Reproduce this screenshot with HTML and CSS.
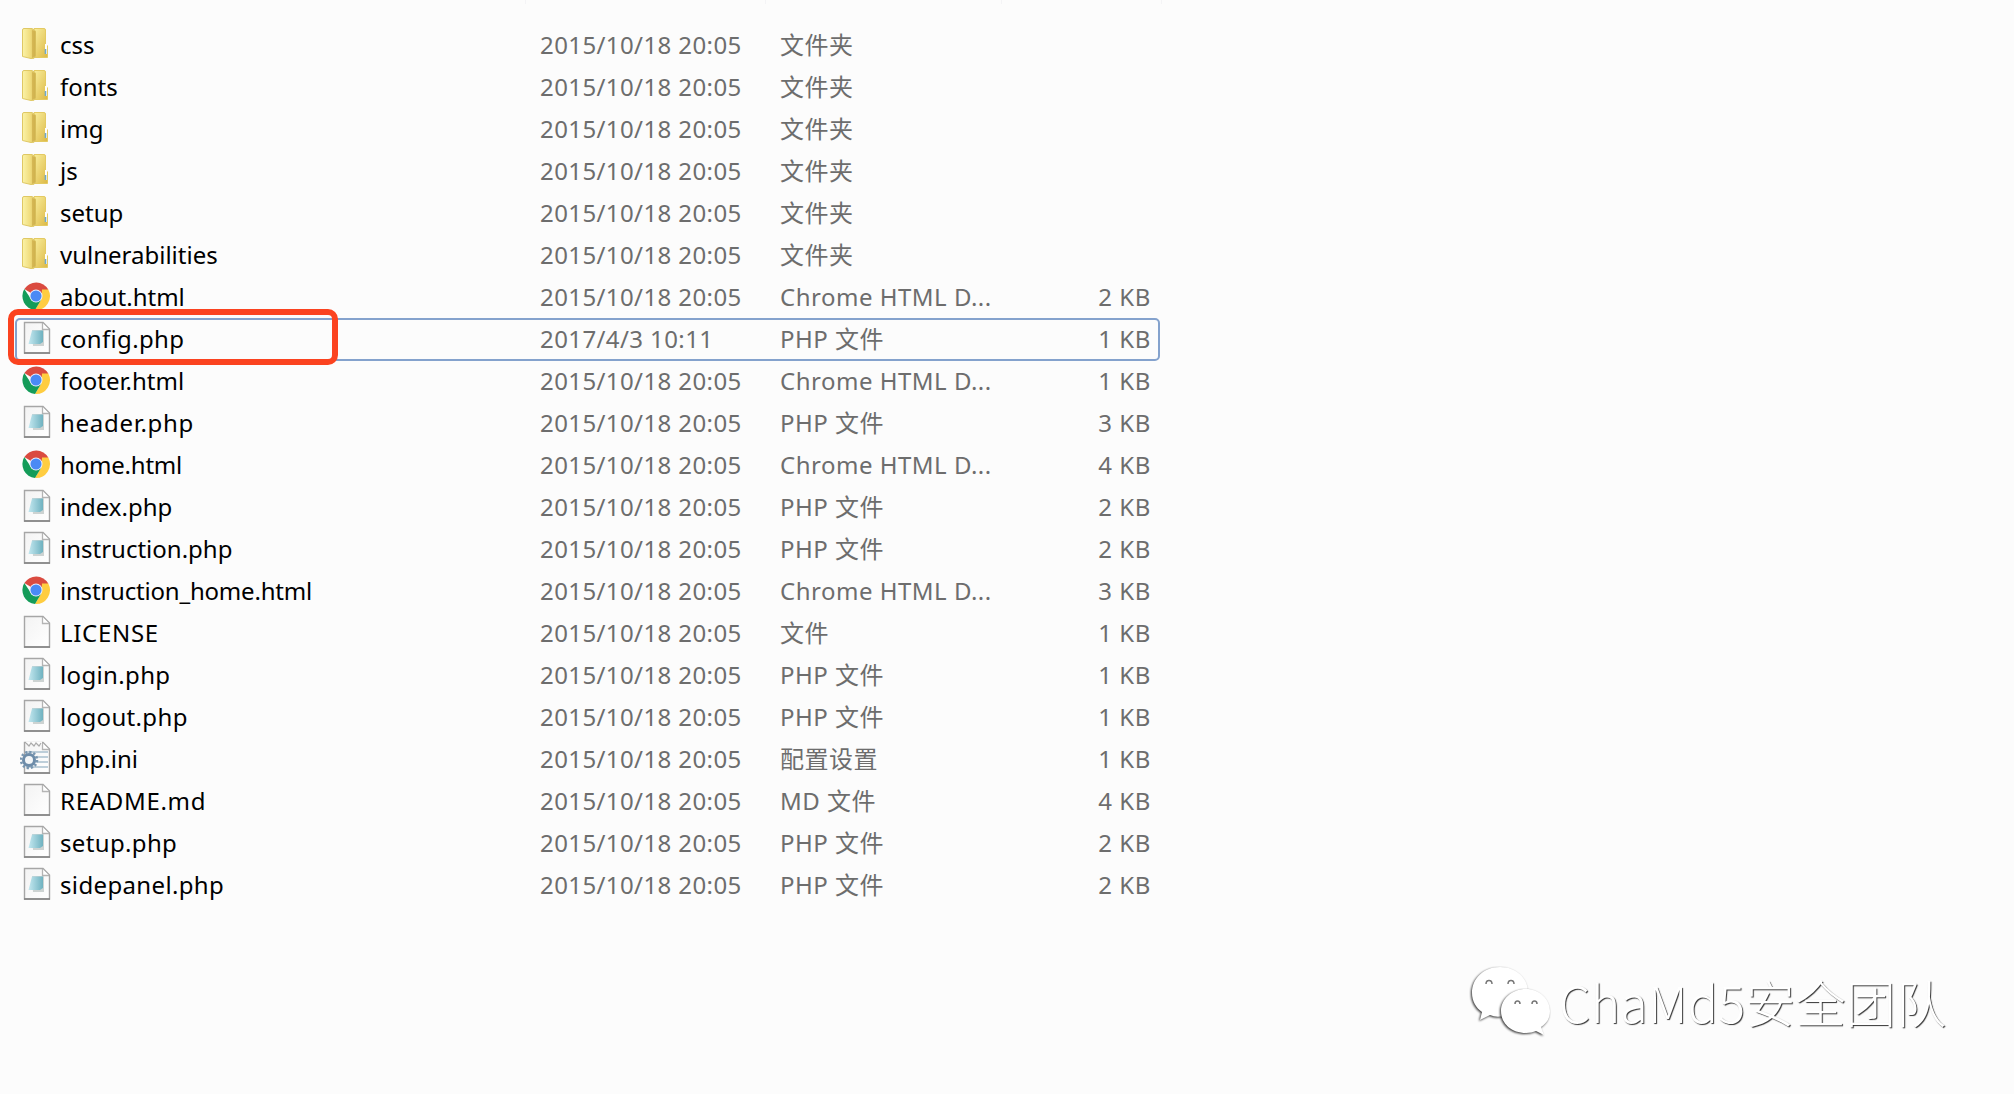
FILE: index.html
```html
<!DOCTYPE html>
<html lang="zh-CN">
<head>
<meta charset="utf-8">
<title>Files</title>
<link rel="stylesheet" href="styles.css">
</head>
<body>
<svg class="defs" aria-hidden="true">
  <defs>
    <linearGradient id="gf" x1="0" x2="1"><stop offset="0" stop-color="#fbf3a8"/><stop offset=".6" stop-color="#f0dc7c"/><stop offset="1" stop-color="#d8bc5c"/></linearGradient>
    <linearGradient id="gb" x1="0" x2="1" y2="1"><stop offset="0" stop-color="#f9ee9c"/><stop offset="1" stop-color="#dcb845"/></linearGradient>
    <linearGradient id="gt" x1="0" x2="1"><stop offset="0" stop-color="#c4e8f0"/><stop offset="1" stop-color="#6fb2c0"/></linearGradient>
    <linearGradient id="gp" x1="0" x2="1" y2="1"><stop offset="0" stop-color="#f3f3f3"/><stop offset="1" stop-color="#fff"/></linearGradient>
    <symbol id="folder" viewBox="0 0 32 34">
      <path d="M14 1.500H24Q25.500 1.500 25.500 3V17L27.500 19V30.500H14Z" fill="url(#gb)" stroke="#e4ca62"/>
      <path d="M2.500 3Q2.500 1.500 4 1.500H12L15.500 4V29Q15 32 11 31.500L2.500 29.500Z" fill="url(#gf)" stroke="#dfc864"/>
      <path d="M12 3L15.500 4.500V29L12 31Z" fill="#c9a943" opacity=".6"/>
      <path d="M26 17V27" stroke="#fff" stroke-width="2"/><path d="M25.500 22V27" stroke="#70a9c9" stroke-width="1.600"/>
    </symbol>
    <symbol id="page" viewBox="0 0 32 34">
      <path d="M4.500 1.500H23L29.500 8V32H4.500Z" fill="url(#gp)" stroke="#a6a6a6" stroke-width="1.400"/>
      <path d="M4 32H30" stroke="#828282" stroke-width="1.500"/>
      <path d="M22.500 2V8.500H29" fill="#fff" stroke="#b4b4b4" stroke-width="1.300"/>
    </symbol>
    <symbol id="php" viewBox="0 0 32 34">
      <use href="#page"/>
      <path d="M12 9H24V25H13Z" fill="#cdd3d2"/>
      <path d="M12 9.500H23V21L20 23H8.500Z" fill="url(#gt)"/>
    </symbol>
    <symbol id="ini" viewBox="0 0 32 34">
      <use href="#page"/>
      <path d="M6 2H22" stroke="#fcfcfc" stroke-width="3"/>
      <path d="M6 2L9 5L11 2L14 5L16 2L19 5L21 2" fill="none" stroke="#aaa" stroke-width="1.200"/>
      <path d="M6 11H28M6 16H28M6 21H28M6 26H28" stroke="#a9c0ce" stroke-width="1.500"/>
      <circle cx="9" cy="19" r="8" fill="none" stroke="#7896b0" stroke-width="2.600" stroke-dasharray="2.200 1.990"/>
      <circle cx="9" cy="19" r="5.500" fill="#f3f6f8" stroke="#6d8ca9" stroke-width="3"/>
    </symbol>
    <symbol id="chrome" viewBox="0 0 32 34">
      <path d="M16 17L4.300 10A14 14 0 0 1 28.300 10.500Z" fill="#da4b40"/>
      <path d="M28.300 10.500A14 14 0 0 1 15 31L21.500 20L22 10.500Z" fill="#ffcd41"/>
      <path d="M4.300 10A14 14 0 0 0 15 31L21 21L11 20Z" fill="#149c59"/>
      <circle cx="16" cy="17" r="6.500" fill="#e8eefa"/>
      <circle cx="16" cy="17" r="5.500" fill="#4a8af4"/>
    </symbol>
  </defs>
</svg>
<div class="edge"><i></i><i></i><i></i><i></i></div>
<main class="list">
  <div class="row"><svg class="icon"><use href="#folder"/></svg><span class="name">css</span><span class="date">2015/10/18 20:05</span><span class="type">文件夹</span><span class="size"></span></div>
  <div class="row"><svg class="icon"><use href="#folder"/></svg><span class="name">fonts</span><span class="date">2015/10/18 20:05</span><span class="type">文件夹</span><span class="size"></span></div>
  <div class="row"><svg class="icon"><use href="#folder"/></svg><span class="name">img</span><span class="date">2015/10/18 20:05</span><span class="type">文件夹</span><span class="size"></span></div>
  <div class="row"><svg class="icon"><use href="#folder"/></svg><span class="name">js</span><span class="date">2015/10/18 20:05</span><span class="type">文件夹</span><span class="size"></span></div>
  <div class="row"><svg class="icon"><use href="#folder"/></svg><span class="name">setup</span><span class="date">2015/10/18 20:05</span><span class="type">文件夹</span><span class="size"></span></div>
  <div class="row"><svg class="icon"><use href="#folder"/></svg><span class="name">vulnerabilities</span><span class="date">2015/10/18 20:05</span><span class="type">文件夹</span><span class="size"></span></div>
  <div class="row"><svg class="icon"><use href="#chrome"/></svg><span class="name">about.html</span><span class="date">2015/10/18 20:05</span><span class="type">Chrome HTML D...</span><span class="size">2 KB</span></div>
  <div class="row focused"><svg class="icon"><use href="#php"/></svg><span class="name loose">config.php</span><span class="date">2017/4/3 10:11</span><span class="type">PHP 文件</span><span class="size">1 KB</span><div class="marker"></div></div>
  <div class="row"><svg class="icon"><use href="#chrome"/></svg><span class="name">footer.html</span><span class="date">2015/10/18 20:05</span><span class="type">Chrome HTML D...</span><span class="size">1 KB</span></div>
  <div class="row"><svg class="icon"><use href="#php"/></svg><span class="name wide">header.php</span><span class="date">2015/10/18 20:05</span><span class="type">PHP 文件</span><span class="size">3 KB</span></div>
  <div class="row"><svg class="icon"><use href="#chrome"/></svg><span class="name tight">home.html</span><span class="date">2015/10/18 20:05</span><span class="type">Chrome HTML D...</span><span class="size">4 KB</span></div>
  <div class="row"><svg class="icon"><use href="#php"/></svg><span class="name">index.php</span><span class="date">2015/10/18 20:05</span><span class="type">PHP 文件</span><span class="size">2 KB</span></div>
  <div class="row"><svg class="icon"><use href="#php"/></svg><span class="name">instruction.php</span><span class="date">2015/10/18 20:05</span><span class="type">PHP 文件</span><span class="size">2 KB</span></div>
  <div class="row"><svg class="icon"><use href="#chrome"/></svg><span class="name tight">instruction_home.html</span><span class="date">2015/10/18 20:05</span><span class="type">Chrome HTML D...</span><span class="size">3 KB</span></div>
  <div class="row"><svg class="icon"><use href="#page"/></svg><span class="name wide">LICENSE</span><span class="date">2015/10/18 20:05</span><span class="type">文件</span><span class="size">1 KB</span></div>
  <div class="row"><svg class="icon"><use href="#php"/></svg><span class="name loose">login.php</span><span class="date">2015/10/18 20:05</span><span class="type">PHP 文件</span><span class="size">1 KB</span></div>
  <div class="row"><svg class="icon"><use href="#php"/></svg><span class="name loose">logout.php</span><span class="date">2015/10/18 20:05</span><span class="type">PHP 文件</span><span class="size">1 KB</span></div>
  <div class="row"><svg class="icon"><use href="#ini"/></svg><span class="name">php.ini</span><span class="date">2015/10/18 20:05</span><span class="type">配置设置</span><span class="size">1 KB</span></div>
  <div class="row"><svg class="icon"><use href="#page"/></svg><span class="name wide">README.md</span><span class="date">2015/10/18 20:05</span><span class="type">MD 文件</span><span class="size">4 KB</span></div>
  <div class="row"><svg class="icon"><use href="#php"/></svg><span class="name loose">setup.php</span><span class="date">2015/10/18 20:05</span><span class="type">PHP 文件</span><span class="size">2 KB</span></div>
  <div class="row"><svg class="icon"><use href="#php"/></svg><span class="name loose">sidepanel.php</span><span class="date">2015/10/18 20:05</span><span class="type">PHP 文件</span><span class="size">2 KB</span></div>
</main>
<div class="watermark">
  <svg class="wechat" viewBox="0 0 84 72">
    <path d="M30 2C14 2 2 13 2 28C2 36 6 43 12 47L10 55L20 50Q26 53 34 51C54 51 58 38 58 27C58 13 46 2 30 2Z"/>
    <path class="front" d="M56 24C42 24 31 34 31 46C31 59 42 68 56 68Q62 68 66 66L74 70L71 62C77 58 80 53 80 46C80 34 69 24 56 24Z"/>
    <g class="eyes"><path d="M16 19a3 3.500 0 0 1 6 0M38 19a3 3.500 0 0 1 6 0M45 39a2.500 3 0 0 1 5 0M62 39a2.500 3 0 0 1 5 0"/></g>
  </svg>
  <span class="brand">ChaMd5安全团队</span>
</div>
</body>
</html>
```

FILE: styles.css
```css
* { box-sizing: border-box; }
body {
  margin: 0;
  width: 2014px;
  height: 1094px;
  overflow: hidden;
  background: #fcfcfc;
  font: 24px/42px "Noto Sans", "Noto Sans CJK SC", sans-serif;
  color: #6d6d6d;
  display: flex;
  flex-direction: column;
}
.defs { position: absolute; width: 0; height: 0; }
.edge { height: 24px; flex: none; display: grid; grid-template-columns: 240px 236px 160px 1px; padding-left: 525px; }
.edge i { width: 1px; height: 4px; background: #f4f4f6; }
.list { display: flex; flex-direction: column; padding-left: 15px; flex: none; }
.row {
  position: relative;
  display: grid;
  grid-template-columns: 45px 480px 240px 250px 121px;
  width: 1145px;
  height: 42px;
  white-space: nowrap;
}
.icon { width: 32px; height: 34px; margin: 3px 0 0 5px; }
.name { color: #000; }
.tight { letter-spacing: -0.2px; }
.loose { letter-spacing: 0.35px; }
.wide { letter-spacing: 0.7px; }
.date { letter-spacing: 0.4px; }
.type { letter-spacing: 0.5px; }
.size { text-align: right; letter-spacing: 0.6px; }
.focused::before {
  content: "";
  position: absolute;
  inset: 0 0 -1px;
  border: 2px solid #84a2cd;
  border-radius: 5px;
}
.marker {
  position: absolute;
  left: -7px;
  top: -9px;
  width: 330px;
  height: 56px;
  border: 6px solid #fb4320;
  border-radius: 10px;
}
.watermark { display: flex; align-items: center; gap: 5px; margin: 59px 0 0 1470px; }
.wechat { width: 84px; height: 72px; overflow: visible; }
.wechat path { fill: #fff; filter: drop-shadow(-0.5px 1px 1px #333); }
.wechat .eyes path { fill: none; stroke: #777; stroke-width: 1.500; filter: none; }
.brand {
  font: 300 50px/70px "Noto Sans CJK SC", sans-serif;
  letter-spacing: 0.3px;
  color: #fff;
  text-shadow: 1px 1px 1px #333;
  white-space: nowrap;
}
```
